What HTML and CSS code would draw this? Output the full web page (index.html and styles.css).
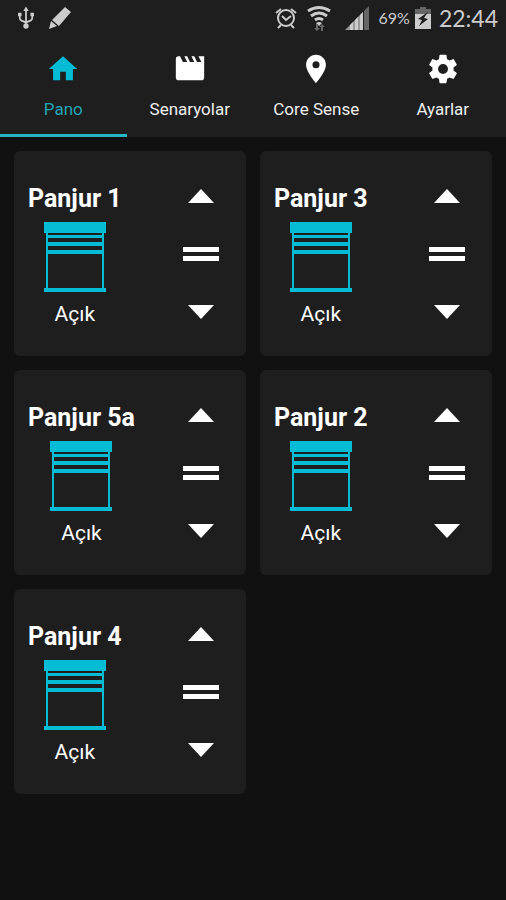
FILE: index.html
```html
<!DOCTYPE html>
<html lang="tr">
<head>
<meta charset="utf-8">
<meta name="viewport" content="width=device-width, initial-scale=1">
<title>Pano</title>
<link rel="stylesheet" href="styles.css">
</head>
<body>
<svg class="defs" aria-hidden="true">
  <symbol id="shutter" viewBox="0 0 62 70">
    <path d="M0 0h62v11H0zM0 66h62v4H0zM2 11h2v55H2zM58 11h2v55h-2zM3 13h56v3H3zM3 20h56v4H3zM3 28h56v4H3z"/>
  </symbol>
  <symbol id="up" viewBox="0 0 36 16"><path d="M18 1l13 14H5z"/></symbol>
  <symbol id="stop" viewBox="0 0 36 16"><path d="M0 1h36v5H0zM0 10h36v5H0z"/></symbol>
  <symbol id="down" viewBox="0 0 36 16"><path d="M5 1h26L18 15z"/></symbol>
</svg>

<header class="top">
  <div class="status">
    <svg class="usb" viewBox="0 0 18 26" aria-hidden="true">
      <path class="line" d="M9 4v18M2 9v4q0 2 2 3l5 2 5-2q2-1 2-3V9"/>
      <path d="M9 0l3 5H6zM0 7h4v4H0zM14 7h4v4h-4z"/><circle cx="9" cy="22" r="3"/>
    </svg>
    <svg class="pencil" viewBox="0 0 24 24" aria-hidden="true">
      <path d="M17 1l6 5L11 20l-7-6zM3 15l6 5-8 3z"/>
    </svg>
    <span class="spacer"></span>
    <svg class="alarm" viewBox="0 0 22 22" aria-hidden="true">
      <circle class="line" cx="11" cy="11" r="8"/>
      <path class="line" d="M7 9l4 4 5-4M1 6l5-4M21 6l-5-4M3 21l3-3M19 21l-3-3"/>
    </svg>
    <svg class="wifi" viewBox="0 0 24 26" aria-hidden="true">
      <path class="line thick" d="M1 6q11-7 22 0M4 11q8-6 16 0M8 15q4-3 8 0"/>
      <path d="M9 18q3-2 6 0l-3 3z"/>
      <path class="dim" d="M9 19h2v4h2l-3 3-3-3h2zM14 26v-4h-2l3-3 3 3h-2v4z"/>
    </svg>
    <svg class="signal" viewBox="0 0 24 24" aria-hidden="true">
      <path class="mid" d="M0 24L18 6v18z"/>
      <path d="M5 24v-5l3-3v8zM10 24V14l3-3v13zM15 24V9l3-3v18z"/>
      <path class="dim" d="M19 24V5l5-5v24z"/>
    </svg>
    <span class="percent">69%</span>
    <svg class="battery" viewBox="0 0 16 22" aria-hidden="true">
      <path class="dim" d="M5 0h6v2h5v5H0V2h5z"/><path d="M0 7h16v15H0z"/>
      <path class="bolt" d="M13 5L3 12l4 1-3 6 9-7-4-1z"/>
    </svg>
    <time class="clock">22:44</time>
  </div>
  <nav class="tabs">
    <a class="tab active" href="#pano" aria-current="page">
      <svg viewBox="0 0 24 24" aria-hidden="true"><path d="M10 20v-6h4v6h5v-8h3L12 3 2 12h3v8z"/></svg>
      Pano
    </a>
    <a class="tab" href="#senaryolar">
      <svg viewBox="0 0 24 24" aria-hidden="true"><path d="M18 3l2 4h-3l-2-4h-2l2 4h-3l-2-4H8l2 4H7L5 3H4a2 2 0 0 0-2 2v13a2 2 0 0 0 2 2h16a2 2 0 0 0 2-2V3z"/></svg>
      Senaryolar
    </a>
    <a class="tab" href="#core-sense">
      <svg viewBox="0 0 24 24" aria-hidden="true"><path d="M12 2C8.130 2 5 5.130 5 9c0 5.250 7 13 7 13s7-7.750 7-13c0-3.870-3.130-7-7-7zm0 9.500a2.500 2.500 0 1 1 0-5 2.500 2.500 0 0 1 0 5z"/></svg>
      Core Sense
    </a>
    <a class="tab" href="#ayarlar">
      <svg viewBox="0 0 24 24" aria-hidden="true"><path d="M19.430 12.980c.04-.32.07-.64.07-.98s-.03-.66-.07-.98l2.110-1.650c.19-.15.24-.42.12-.64l-2-3.460c-.12-.22-.39-.3-.61-.22l-2.490 1c-.52-.4-1.080-.73-1.690-.98l-.38-2.650A.49.49 0 0 0 14 2h-4c-.25 0-.46.18-.49.42l-.38 2.650c-.61.25-1.170.59-1.690.98l-2.490-1c-.23-.09-.49 0-.61.22l-2 3.460c-.13.22-.07.49.12.64l2.110 1.650c-.04.32-.07.65-.07.98s.03.66.07.98l-2.110 1.650c-.19.15-.24.42-.12.64l2 3.460c.12.22.39.3.61.22l2.490-1c.52.4 1.080.73 1.690.98l.38 2.650c.03.24.24.42.49.42h4c.25 0 .46-.18.49-.42l.38-2.650c.61-.25 1.170-.59 1.690-.98l2.490 1c.23.09.49 0 .61-.22l2-3.460c.12-.22.07-.49-.12-.64zM12 15.500a3.500 3.500 0 1 1 0-7 3.500 3.500 0 0 1 0 7z"/></svg>
      Ayarlar
    </a>
  </nav>
</header>

<main class="grid">
  <article class="card">
    <div class="info"><h2>Panjur 1</h2><svg class="shutter" aria-hidden="true"><use href="#shutter"/></svg><p>Açık</p></div>
    <div class="controls">
      <button type="button" aria-label="Yukarı"><svg><use href="#up"/></svg></button>
      <button type="button" aria-label="Durdur"><svg><use href="#stop"/></svg></button>
      <button type="button" aria-label="Aşağı"><svg><use href="#down"/></svg></button>
    </div>
  </article>
  <article class="card">
    <div class="info"><h2>Panjur 3</h2><svg class="shutter" aria-hidden="true"><use href="#shutter"/></svg><p>Açık</p></div>
    <div class="controls">
      <button type="button" aria-label="Yukarı"><svg><use href="#up"/></svg></button>
      <button type="button" aria-label="Durdur"><svg><use href="#stop"/></svg></button>
      <button type="button" aria-label="Aşağı"><svg><use href="#down"/></svg></button>
    </div>
  </article>
  <article class="card">
    <div class="info"><h2>Panjur 5a</h2><svg class="shutter" aria-hidden="true"><use href="#shutter"/></svg><p>Açık</p></div>
    <div class="controls">
      <button type="button" aria-label="Yukarı"><svg><use href="#up"/></svg></button>
      <button type="button" aria-label="Durdur"><svg><use href="#stop"/></svg></button>
      <button type="button" aria-label="Aşağı"><svg><use href="#down"/></svg></button>
    </div>
  </article>
  <article class="card">
    <div class="info"><h2>Panjur 2</h2><svg class="shutter" aria-hidden="true"><use href="#shutter"/></svg><p>Açık</p></div>
    <div class="controls">
      <button type="button" aria-label="Yukarı"><svg><use href="#up"/></svg></button>
      <button type="button" aria-label="Durdur"><svg><use href="#stop"/></svg></button>
      <button type="button" aria-label="Aşağı"><svg><use href="#down"/></svg></button>
    </div>
  </article>
  <article class="card">
    <div class="info"><h2>Panjur 4</h2><svg class="shutter" aria-hidden="true"><use href="#shutter"/></svg><p>Açık</p></div>
    <div class="controls">
      <button type="button" aria-label="Yukarı"><svg><use href="#up"/></svg></button>
      <button type="button" aria-label="Durdur"><svg><use href="#stop"/></svg></button>
      <button type="button" aria-label="Aşağı"><svg><use href="#down"/></svg></button>
    </div>
  </article>
</main>
</body>
</html>
```
FILE: styles.css
```css
* { box-sizing: border-box; }

body {
  margin: 0;
  background: #111111;
  color: #ffffff;
  font-family: Roboto, "Liberation Sans", sans-serif;
}

svg { display: block; fill: currentColor; }
.defs { display: none; }

.top { background: #1e1e1e; }

.status {
  display: flex;
  align-items: center;
  height: 36px;
  padding: 0 8px 0 18px;
  color: #cccccc;
}
.status svg { flex: none; }
.status .line { fill: none; stroke: currentColor; stroke-width: 2; }
.status .thick { stroke-width: 3; }
.status .dim { fill: #666666; }
.status .mid { fill: #999999; }
.usb { width: 16px; height: 24px; }
.pencil { width: 24px; height: 24px; margin-left: 14px; }
.spacer { flex: 1; }
.alarm { width: 22px; height: 22px; }
.wifi { width: 24px; height: 26px; margin-left: 10px; }
.signal { width: 24px; height: 24px; margin-left: 14px; }
.percent { margin-left: 10px; font: 16px/20px Lato, sans-serif; }
.battery { width: 16px; height: 22px; margin-left: 5px; }
.status .bolt { fill: #1e1e1e; }
.clock { margin-left: 8px; font: 23px/28px Lato, sans-serif; }

.tabs { display: grid; grid-template-columns: repeat(4, 1fr); }
.tab {
  display: flex;
  flex-direction: column;
  align-items: center;
  gap: 12px;
  padding: 16px 0 14px;
  border-bottom: 3px solid transparent;
  color: #eeeeee;
  font-size: 17px;
  line-height: 22px;
  text-decoration: none;
  white-space: nowrap;
}
.tab svg { width: 34px; height: 34px; color: #ffffff; }
.tab.active { color: #22a5b1; border-color: #25b6c4; }
.tab.active svg { color: #05bcd4; }

.grid {
  display: grid;
  grid-template-columns: 1fr 1fr;
  gap: 14px;
  padding: 14px;
}
.card {
  display: flex;
  align-items: center;
  justify-content: space-between;
  padding: 16px 14px 15px;
  border-radius: 6px;
  background: #1e1e1e;
}
.info {
  display: flex;
  flex-direction: column;
  align-items: center;
  padding-top: 4px;
}
.info h2 { margin: 0; font-size: 25px; line-height: 30px; font-weight: 700; }
.info p { margin: 8px 0 0; font-size: 21px; line-height: 28px; }
.shutter { width: 62px; height: 70px; margin-top: 8px; color: #05bcd4; }

.controls { display: flex; flex-direction: column; }
.controls button {
  display: grid;
  place-items: center;
  width: 62px;
  height: 58px;
  padding: 0;
  border: 0;
  background: none;
  color: #ffffff;
}
.controls svg { width: 36px; height: 16px; }
```
